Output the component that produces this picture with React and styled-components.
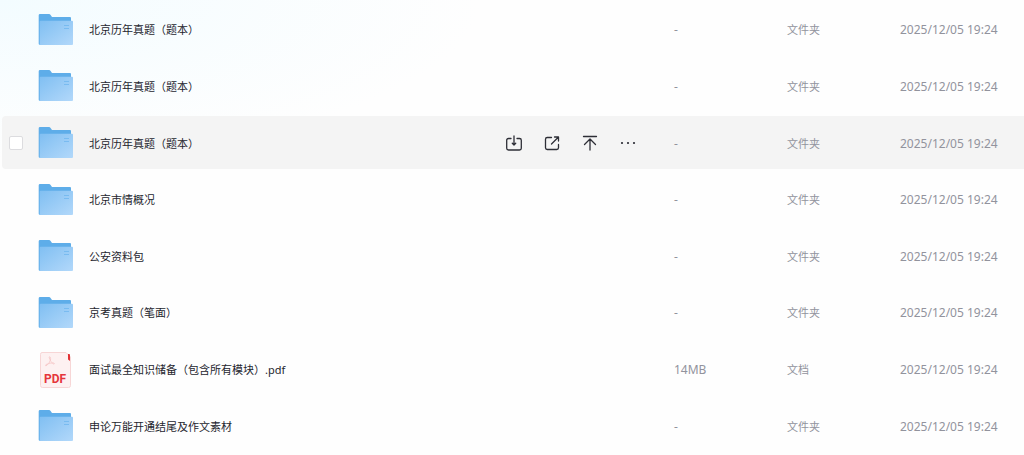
import React, { useState } from "react"
import styled, { createGlobalStyle } from "styled-components"

const GlobalStyle = createGlobalStyle`
    * {
        box-sizing: border-box;
    }
    body {
        margin: 0;
        min-height: 100vh;
        background: radial-gradient(ellipse 480px 160px at 0 0, #f3fcff, #fefefe);
        background-repeat: no-repeat;
        background-color: #fefefe;
        font-family: "Noto Sans", "Noto Sans CJK SC", sans-serif;
    }
`

const FileTable = styled.table`
    display: block;
    width: 100%;
    padding: 3px 0 3px 2px;
`

const FileBody = styled.tbody`
    display: grid;
    grid-auto-rows: 1fr;
    gap: 4px;
    min-height: calc(100vh - 6px);
`

const FileRow = styled.tr`
    display: grid;
    grid-template-columns: 36px 51px minmax(0, 1fr) auto 113px 113px 124px;
    align-items: center;
    border-radius: 4px 0 0 4px;
    background: ${({ $active }) => $active ? "#f4f4f4" : "transparent"};
`

const Cell = styled.td`
    display: flex;
    align-items: center;
    padding: 0;
`

const CheckCell = styled(Cell)`
    padding-left: 7px;
`

const IconCell = styled(Cell)`
    padding-top: 1px;
`

const TextCell = styled(Cell)`
    padding-top: 2px;
    font-size: 12px;
    line-height: 20px;
    color: #92939d;
    white-space: nowrap;
`

const TypeCell = styled(TextCell)`
    font-size: 11px;
`

const NameCell = styled(TextCell)`
    font-size: 11px;
    overflow: hidden;
    a {
        color: #25262f;
        text-decoration: none;
    }
`

const ActionCell = styled(Cell)`
    gap: 18px;
    padding-right: 36px;
`

const Checkbox = styled.input`
    appearance: none;
    width: 14px;
    height: 14px;
    margin: 0;
    border: 1px solid #dcdcdf;
    border-radius: 2px;
    background: #fff;
    cursor: pointer;
    &:checked {
        background: #5faeec;
    }
`

const ActionButton = styled.button`
    width: 20px;
    height: 20px;
    padding: 0;
    border: none;
    background: none;
    color: #2d2e36;
    cursor: pointer;
    svg {
        display: block;
        fill: none;
        stroke: currentColor;
        stroke-width: 1.3;
        stroke-linecap: round;
        stroke-linejoin: round;
    }
`

const PdfLabel = styled.text`
    font-family: Roboto, "Liberation Sans", sans-serif;
    font-size: 12px;
    font-weight: 700;
    fill: #e5363b;
`

const FolderIcon = () => (
    <svg width="36" height="36" viewBox="0 0 36 36" aria-hidden="true">
        <defs>
            <linearGradient id="folderFront" x1="0" y1="0" x2="1" y2="1">
                <stop offset="0" stopColor="#80bff2" />
                <stop offset="1" stopColor="#b2d8fa" />
            </linearGradient>
        </defs>
        <path d="M.7 3.2Q.7 2 2 2H11Q12 2 12.6 3L14 5H32Q33 5 33 6V32.700H1.700Q.7 32.700 .7 31.700Z" fill="#5eade9" />
        <rect x="1.700" y="8.700" width="33.300" height="24.300" rx="1" fill="url(#folderFront)" />
        <path d="M26 13.500H31M26 16.500H31" stroke="#70b6ef" strokeWidth=".8" />
    </svg>
)

const PdfIcon = () => (
    <svg width="36" height="38" viewBox="0 0 36 38" aria-hidden="true">
        <path d="M4 1.500H28L32.500 6V34.500Q32.500 36.500 30.500 36.500H4.500Q2.500 36.500 2.500 34.500V3.500Q2.500 1.500 4 1.500Z" fill="#fdf1f1" stroke="#f7d6d6" />
        <path d="M30 3H31Q32 3 32 4V10L30 8.500Z" fill="#e23236" />
        <path d="M11 6Q13 5 12.500 9Q11.500 12.500 8 15Q7 15 8 13.500Q12 11.500 16 12Q17 13 15.500 13Q12 11 11 6Z" fill="none" stroke="#f6c9c9" strokeWidth=".9" />
        <PdfLabel x="17" y="32" textAnchor="middle">PDF</PdfLabel>
    </svg>
)

const actions = [
    {
        label: "下载",
        icon: <path d="M7 5.500H4.500Q2.700 5.500 2.700 7.300V15.200Q2.700 17 4.500 17H15.500Q17.300 17 17.300 15.200V7.300Q17.300 5.500 15.500 5.500H13M10 3V11.500M8.300 10.300L10 12L11.700 10.300" />,
    },
    {
        label: "分享",
        icon: <path d="M9.500 4.500H5.300Q3.500 4.500 3.500 6.300V14.700Q3.500 16.500 5.300 16.500H14.700Q16.500 16.500 16.500 14.700V11.500M9.500 11L16 4.500M12.500 4H16.500V8" />,
    },
    {
        label: "置顶",
        icon: <path d="M3.500 3.500H16.500M10 17V6.500M4.500 11.500L10 6L15.500 11.500" />,
    },
    {
        label: "更多",
        icon: <path d="M4 10H4.010M10 10H10.010M16 10H16.010" strokeWidth="2.200" />,
    },
]

const files = [
    { name: "北京历年真题（题本）", size: "-", type: "文件夹" },
    { name: "北京历年真题（题本）", size: "-", type: "文件夹" },
    { name: "北京历年真题（题本）", size: "-", type: "文件夹" },
    { name: "北京市情概况", size: "-", type: "文件夹" },
    { name: "公安资料包", size: "-", type: "文件夹" },
    { name: "京考真题（笔面）", size: "-", type: "文件夹" },
    { name: "面试最全知识储备（包含所有模块）.pdf", size: "14MB", type: "文档" },
    { name: "申论万能开通结尾及作文素材", size: "-", type: "文件夹" },
]

export default function App() {
    const [active, setActive] = useState(2)
    return (
        <>
            <GlobalStyle />
            <FileTable>
                <FileBody>
                    {files.map((file, i) => (
                        <FileRow key={i} $active={i === active} onMouseEnter={() => setActive(i)}>
                            <CheckCell>
                                {i === active && <Checkbox type="checkbox" aria-label={file.name} />}
                            </CheckCell>
                            <IconCell>{file.type === "文档" ? <PdfIcon /> : <FolderIcon />}</IconCell>
                            <NameCell><a href="#file">{file.name}</a></NameCell>
                            <ActionCell>
                                {i === active && actions.map(({ label, icon }) => (
                                    <ActionButton key={label} type="button" aria-label={label}>
                                        <svg width="20" height="20" viewBox="0 0 20 20">{icon}</svg>
                                    </ActionButton>
                                ))}
                            </ActionCell>
                            <TextCell>{file.size}</TextCell>
                            <TypeCell>{file.type}</TypeCell>
                            <TextCell>2025/12/05 19:24</TextCell>
                        </FileRow>
                    ))}
                </FileBody>
            </FileTable>
        </>
    )
}
